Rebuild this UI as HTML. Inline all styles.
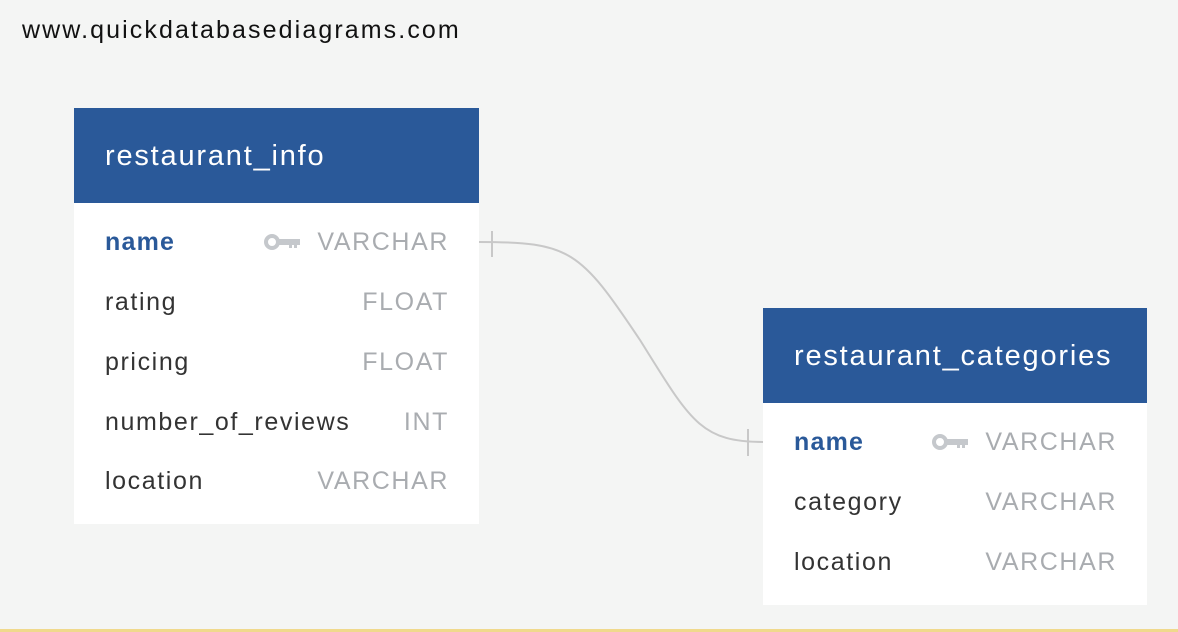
<!DOCTYPE html>
<html><head><style>
body{margin:0;width:1178px;height:632px;background:#f4f5f4;font-family:"Liberation Sans",Arial,sans-serif;position:relative;overflow:hidden}
.url{position:absolute;left:22px;top:16px;font-size:25px;color:#111;letter-spacing:2.1px}
.t{position:absolute;background:#fff}
.h{background:#2a5999;color:#fff;font-size:29px;height:95px;line-height:97px;padding-left:31px;box-sizing:border-box;letter-spacing:1.8px}
.r{position:absolute;left:31px;right:31px;font-size:25px;color:#333;height:30px;line-height:30px;letter-spacing:1.6px}
.r .ty{position:absolute;right:-1px;top:0;color:#a9acb0}
.r.pk{color:#2a5999;font-weight:bold;letter-spacing:1.2px}
.r.pk .ty{font-weight:normal;letter-spacing:1.6px}
.key{position:absolute;top:7px}
.bot{position:absolute;left:0;right:0;top:629px;height:3px;background:#f0d98c}
</style></head><body>
<div class="url">www.quickdatabasediagrams.com</div>
<svg width="1178" height="632" style="position:absolute;left:0;top:0">
<path d="M479 242 C 570 242, 580 250, 640 340 C 690 420, 700 442, 763 442" fill="none" stroke="#c8c8c8" stroke-width="2"/>
<line x1="492" y1="231" x2="492" y2="257" stroke="#c8c8c8" stroke-width="2"/>
<line x1="748" y1="429" x2="748" y2="456" stroke="#c8c8c8" stroke-width="2"/>
</svg>
<div class="t" style="left:74px;top:108px;width:405px;height:416px">
<div class="h">restaurant_info</div>
<div class="r pk" style="top:119px">name<svg class="key" style="left:159px" width="36" height="16" viewBox="0 0 36 16"><circle cx="8" cy="8" r="6" fill="none" stroke="#c5c8cc" stroke-width="4"/><path d="M13 5h23v6h-3v3h-3v-3h-2v3h-3v-3h-12z" fill="#c5c8cc"/></svg><span class="ty">VARCHAR</span></div>
<div class="r" style="top:179px">rating<span class="ty">FLOAT</span></div>
<div class="r" style="top:239px">pricing<span class="ty">FLOAT</span></div>
<div class="r" style="top:299px">number_of_reviews<span class="ty">INT</span></div>
<div class="r" style="top:358px">location<span class="ty">VARCHAR</span></div>
</div>
<div class="t" style="left:763px;top:308px;width:384px;height:297px">
<div class="h">restaurant_categories</div>
<div class="r pk" style="top:119px">name<svg class="key" style="left:138px" width="36" height="16" viewBox="0 0 36 16"><circle cx="8" cy="8" r="6" fill="none" stroke="#c5c8cc" stroke-width="4"/><path d="M13 5h23v6h-3v3h-3v-3h-2v3h-3v-3h-12z" fill="#c5c8cc"/></svg><span class="ty">VARCHAR</span></div>
<div class="r" style="top:179px">category<span class="ty">VARCHAR</span></div>
<div class="r" style="top:239px">location<span class="ty">VARCHAR</span></div>
</div>
<div class="bot"></div>
</body></html>
